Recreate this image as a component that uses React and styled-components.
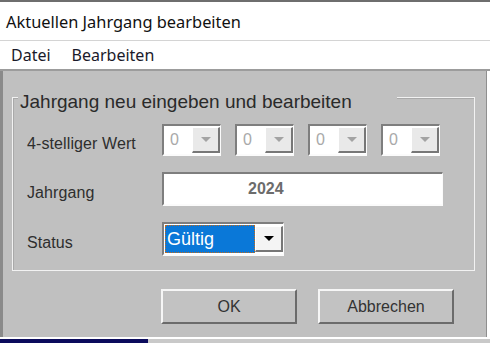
import React from 'react';
import styled, { createGlobalStyle } from 'styled-components';

const Global = createGlobalStyle`
  html, body {
    margin: 0;
    padding: 0;
    background: #fff;
  }
  body {
    width: 490px;
    height: 343px;
    overflow: hidden;
    font-family: "Liberation Sans", Arial, sans-serif;
  }
`;

const Window = styled.div`
  display: flex;
  flex-direction: column;
  width: 490px;
  height: 343px;
`;

const TitleBar = styled.header`
  height: 38px;
  border-top: 2px solid #6e6e6e;
  border-bottom: 1px solid #d4d4d4;
  display: flex;
  align-items: center;
  padding-left: 6px;
  font-family: "Noto Sans", "Open Sans", sans-serif;
  font-size: 16.4px;
  color: #111;
  box-sizing: content-box;
`;

const MenuBar = styled.nav`
  height: 28px;
  display: flex;
  align-items: center;
  gap: 21px;
  padding-left: 11px;
  font-family: "Noto Sans", "Open Sans", sans-serif;
  font-size: 16px;
  color: #1a1a2a;
  border-bottom: 2px solid #9c9c9c;
`;

const Body = styled.main`
  width: 483px;
  height: 266px;
  background: #c0c0c0;
  border-left: 3px solid #8a8a8a;
  border-right: 1px solid #8f8f8f;
  display: flex;
  flex-direction: column;
  align-items: flex-start;
`;

const Group = styled.section`
  margin: 26px 0 0 9px;
  width: 461px;
  height: 172px;
  border: 1px solid #f2f2f2;
  box-shadow: inset 1px 1px 0 #a9a9a9;
  display: flex;
  flex-direction: column;
`;

const Caption = styled.div`
  align-self: flex-start;
  margin: -7px 0 0 5px;
  padding: 0 45px 0 2px;
  background: #c0c0c0;
  font-size: 19px;
  line-height: 22px;
  color: #2a2a2a;
`;

const Form = styled.div`
  display: grid;
  grid-template-columns: 135px auto;
  grid-template-rows: 32px 34px 34px;
  row-gap: 16px;
  align-items: center;
  margin: 11px 0 0 14px;
`;

const Label = styled.span`
  padding-top: 8px;
  font-size: 16px;
  color: #2e2e2e;
  letter-spacing: 0.1px;
`;

const Combos = styled.div`
  display: flex;
  gap: 14px;
`;

const Sunken = styled.div`
  box-sizing: border-box;
  display: flex;
  align-items: stretch;
  border-top: 2px solid #7e7e7e;
  border-left: 2px solid #7e7e7e;
  border-right: 1px solid #fbfbfb;
  border-bottom: 2px solid #fbfbfb;
  background: #fff;
`;

const Combo = styled(Sunken)`
  width: 59px;
  height: 32px;
`;

const ComboValue = styled.span`
  flex: 1;
  display: flex;
  align-items: center;
  padding-left: 6px;
  font-size: 16px;
  color: ${p => (p.$disabled ? '#a9a9a9' : '#111')};
`;

const ArrowButton = styled.span`
  width: 25px;
  display: flex;
  align-items: center;
  justify-content: center;
  margin: 1px 0 1px 0;
  background: ${p => (p.$light ? '#f4f4f4' : '#e9e9e9')};
  border-top: 1px solid #fff;
  border-left: 1px solid #fff;
  border-right: 2px solid #777;
  border-bottom: 2px solid #777;
`;

const Triangle = styled.span`
  width: 0;
  height: 0;
  border-left: 5px solid transparent;
  border-right: 5px solid transparent;
  border-top: 5px solid ${p => p.$color};
`;

const YearField = styled(Sunken)`
  width: 281px;
  height: 34px;
  align-items: center;
  padding-left: 84px;
  font-size: 16px;
  font-weight: bold;
  color: #6c6c6c;
`;

const Select = styled(Sunken)`
  width: 122px;
  height: 34px;
  background: #fff;
  padding: 1px 0 1px 1px;
`;

const Selected = styled.span`
  flex: 1;
  display: flex;
  align-items: center;
  padding-left: 2px;
  background: #0a78d8;
  color: #fff;
  font-size: 18px;
  outline: 1px dotted #c26a1a;
  outline-offset: -1px;
`;

const Actions = styled.div`
  display: flex;
  gap: 21px;
  margin: 18px 0 0 158px;
`;

const Button = styled.button`
  width: 136px;
  height: 35px;
  box-sizing: border-box;
  background: #c2c2c2;
  border-top: 2px solid #f6f6f6;
  border-left: 2px solid #f6f6f6;
  border-right: 2px solid #6b6b6b;
  border-bottom: 2px solid #6b6b6b;
  font-family: "Liberation Sans", Arial, sans-serif;
  font-size: 16px;
  color: #333;
  padding: 0;
`;

const Footer = styled.footer`
  display: flex;
  flex-direction: column;
  flex: 1;
`;

const FooterLine = styled.div`
  height: 2px;
  background: #fff;
`;

const Taskbar = styled.div`
  flex: 1;
  display: flex;
  background: #c9c9c9;
`;

const TaskItem = styled.div`
  width: 148px;
  background: #0b0b5c;
`;

const digits = ['0', '0', '0', '0'];

export default function App() {
  return (
    <>
      <Global />
      <Window>
        <TitleBar>Aktuellen Jahrgang bearbeiten</TitleBar>
        <MenuBar>
          <span>Datei</span>
          <span>Bearbeiten</span>
        </MenuBar>
        <Body>
          <Group>
            <Caption>Jahrgang neu eingeben und bearbeiten</Caption>
            <Form>
              <Label>4-stelliger Wert</Label>
              <Combos>
                {digits.map((d, i) => (
                  <Combo key={i}>
                    <ComboValue $disabled>{d}</ComboValue>
                    <ArrowButton>
                      <Triangle $color="#a3a3a3" />
                    </ArrowButton>
                  </Combo>
                ))}
              </Combos>
              <Label>Jahrgang</Label>
              <YearField>2024</YearField>
              <Label>Status</Label>
              <Select>
                <Selected>Gültig</Selected>
                <ArrowButton $light>
                  <Triangle $color="#000" />
                </ArrowButton>
              </Select>
            </Form>
          </Group>
          <Actions>
            <Button>OK</Button>
            <Button>Abbrechen</Button>
          </Actions>
        </Body>
        <Footer>
          <FooterLine />
          <Taskbar>
            <TaskItem />
          </Taskbar>
        </Footer>
      </Window>
    </>
  );
}
